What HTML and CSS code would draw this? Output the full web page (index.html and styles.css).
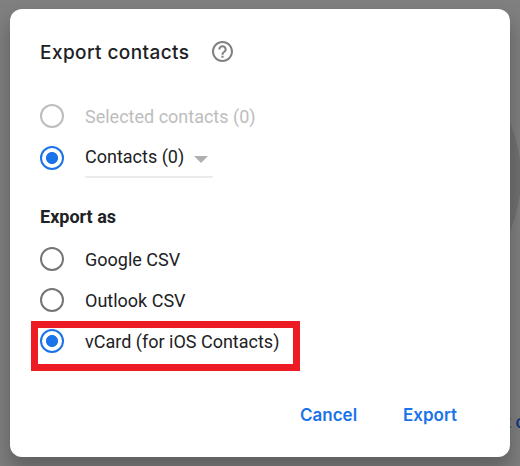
FILE: index.html
```html
<!DOCTYPE html>
<html lang="en">
<head>
  <meta charset="UTF-8">
  <meta name="viewport" content="width=device-width, initial-scale=1.0">
  <title>Export contacts</title>
  <link rel="stylesheet" href="styles.css">
</head>
<body>
  <div class="backdrop-circle"></div>
  <span class="backdrop-text">t c</span>

  <div class="dialog">
    <div class="header">
      <h2>Export contacts</h2>
      <svg class="help" width="21" height="21" viewBox="2 2 20 20" fill="#808080">
        <path d="M11 18h2v-2h-2v2zm1-16C6.480 2 2 6.480 2 12s4.480 10 10 10 10-4.480 10-10S17.520 2 12 2zm0 18c-4.410 0-8-3.590-8-8s3.590-8 8-8 8 3.590 8 8-3.590 8-8 8zm0-14c-2.210 0-4 1.790-4 4h2c0-1.100.9-2 2-2s2 .9 2 2c0 2-3 1.750-3 5h2c0-2.250 3-2.500 3-5 0-2.210-1.790-4-4-4z"/>
      </svg>
    </div>

    <div class="option disabled">
      <span class="radio"></span>
      <span class="label">Selected contacts (0)</span>
    </div>
    <div class="option source">
      <span class="radio checked"></span>
      <div class="select">
        <span class="label">Contacts (0)</span>
        <span class="arrow"></span>
      </div>
    </div>

    <h3>Export as</h3>
    <div class="option format">
      <span class="radio"></span>
      <span class="label">Google CSV</span>
    </div>
    <div class="option format">
      <span class="radio"></span>
      <span class="label">Outlook CSV</span>
    </div>
    <div class="option format highlight">
      <span class="radio checked"></span>
      <span class="label">vCard (for iOS Contacts)</span>
    </div>

    <div class="actions">
      <button>Cancel</button>
      <button>Export</button>
    </div>
  </div>
</body>
</html>
```
FILE: styles.css
```css
* {
  box-sizing: border-box;
}
body {
  margin: 0;
  height: 466px;
  padding: 9px 10px;
  overflow: hidden;
  position: relative;
  background: #808080;
  font-family: Roboto, sans-serif;
  color: #202124;
}
.backdrop-circle {
  position: absolute;
  left: 241px;
  top: 37px;
  width: 280px;
  height: 280px;
  border-radius: 50%;
  background: #727272;
}
.backdrop-text {
  position: absolute;
  left: 505px;
  top: 411px;
  font: 500 18px/22px Roboto, sans-serif;
  color: #0d3a80;
  white-space: nowrap;
}
.dialog {
  position: relative;
  height: 448px;
  padding: 30px;
  background: #fff;
  border-radius: 12px;
  box-shadow: 0 12px 20px 2px rgba(0,0,0,0.25);
}
.header {
  display: flex;
  align-items: flex-start;
  height: 26px;
}
.help {
  margin-top: 2px;
}
h2 {
  width: 172px;
  margin: 0;
  padding-top: 1px;
  font: 500 19px/26px Inter, sans-serif;
  letter-spacing: 0.42px;
  white-space: nowrap;
}
.option {
  display: flex;
  align-items: center;
  height: 24px;
}
.option.disabled {
  margin-top: 39px;
}
.option.source {
  margin-top: 18px;
}
.radio {
  width: 24px;
  height: 24px;
  margin-right: 21px;
  border: 2px solid #757575;
  border-radius: 50%;
}
.disabled .radio {
  border-color: #bdbdbd;
}
.radio.checked {
  border-color: #1a73e8;
  background: radial-gradient(circle, #1a73e8 5.6px, transparent 6.4px);
}
.label {
  font-size: 18px;
  line-height: 24px;
  white-space: nowrap;
}
.option > .label {
  padding-top: 2px;
}
.disabled .label {
  color: #bdbdbd;
}
.select {
  display: flex;
  align-items: center;
  justify-content: space-between;
  width: 128px;
  height: 40px;
  padding-right: 5px;
  border-bottom: 2px solid #ebebeb;
  border-radius: 2px;
}
.arrow {
  margin-top: 4px;
  border: 7px solid transparent;
  border-top-color: #b0b0b0;
  border-bottom: 0;
}
h3 {
  margin: 35px 0 18px;
  font-size: 18px;
  line-height: 24px;
  font-weight: 700;
}
.format {
  position: relative;
  margin-bottom: 17px;
}
.highlight::after {
  content: "";
  position: absolute;
  left: -9px;
  top: -8px;
  width: 255px;
  height: 36px;
  box-sizing: content-box;
  border: 7px solid #ed1c24;
}
.actions {
  display: flex;
  justify-content: space-between;
  width: 157px;
  margin: 50px 0 0 260px;
}
button {
  padding: 0;
  border: 0;
  background: none;
  color: #1a73e8;
  font: 600 17px/24px Inter, sans-serif;
  cursor: pointer;
}
```
